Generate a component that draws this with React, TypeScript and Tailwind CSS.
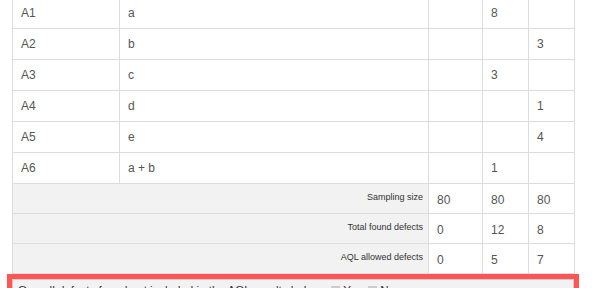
const rows = [
  { code: "A1", desc: "a", v: ["", "8", ""] },
  { code: "A2", desc: "b", v: ["", "", "3"] },
  { code: "A3", desc: "c", v: ["", "3", ""] },
  { code: "A4", desc: "d", v: ["", "", "1"] },
  { code: "A5", desc: "e", v: ["", "", "4"] },
  { code: "A6", desc: "a + b", v: ["", "1", ""] },
];

const totals = [
  { label: "Sampling size", v: ["80", "80", "80"] },
  { label: "Total found defects", v: ["0", "12", "8"] },
  { label: "AQL allowed defects", v: ["0", "5", "7"] },
];

const cell = "border border-[#dddddd] px-[8px] py-[7px] leading-[16px] align-top";
const numCell = "border border-[#dddddd] px-[8px] pt-[8px] pb-[5px] leading-[16px] align-top";

export default function App() {
  return (
    <div className="w-[592px] h-[288px] overflow-hidden bg-white font-['Liberation_Sans',Arial,sans-serif] text-[12px] text-[#555]">
      <div className="ml-[12px] w-[562px]">
        <table className="-mt-[3px] w-[562px] table-fixed border-collapse">
          <colgroup>
            <col className="w-[107px]" />
            <col className="w-[309px]" />
            <col className="w-[54px]" />
            <col className="w-[46px]" />
            <col className="w-[46px]" />
          </colgroup>
          <tbody>
            {rows.map((r) => (
              <tr key={r.code}>
                <td className={cell}>{r.code}</td>
                <td className={cell}>{r.desc}</td>
                {r.v.map((x, i) => (
                  <td key={i} className={cell}>{x}</td>
                ))}
              </tr>
            ))}
            {totals.map((t) => (
              <tr key={t.label}>
                <td
                  colSpan={2}
                  className="border border-[#dddddd] bg-[#f2f2f2] pr-[5px] pt-[8px] align-top text-right text-[9px] leading-[10px] text-[#333]"
                >
                  {t.label}
                </td>
                {t.v.map((x, i) => (
                  <td key={i} className={numCell}>{x}</td>
                ))}
              </tr>
            ))}
          </tbody>
        </table>

        {/* highlighted question box */}
        <div className="-mx-[5px] border-[5px] border-[#ff5555]">
          <div className="flex items-center gap-[3px] border border-[#cccccc] bg-[#f2f2f2] px-[5px] pt-[2px] pb-[6px] text-[11.6px] leading-[16px] text-[#333]">
            <span className="mr-[4px]">Overall defects found not included in the AQL results below:</span>
            <span className="h-[9px] w-[9px] bg-[#cccccc]" />
            <span className="mr-[3px]">Yes</span>
            <span className="h-[9px] w-[9px] bg-[#cccccc]" />
            <span>No</span>
          </div>
        </div>
      </div>
    </div>
  );
}
